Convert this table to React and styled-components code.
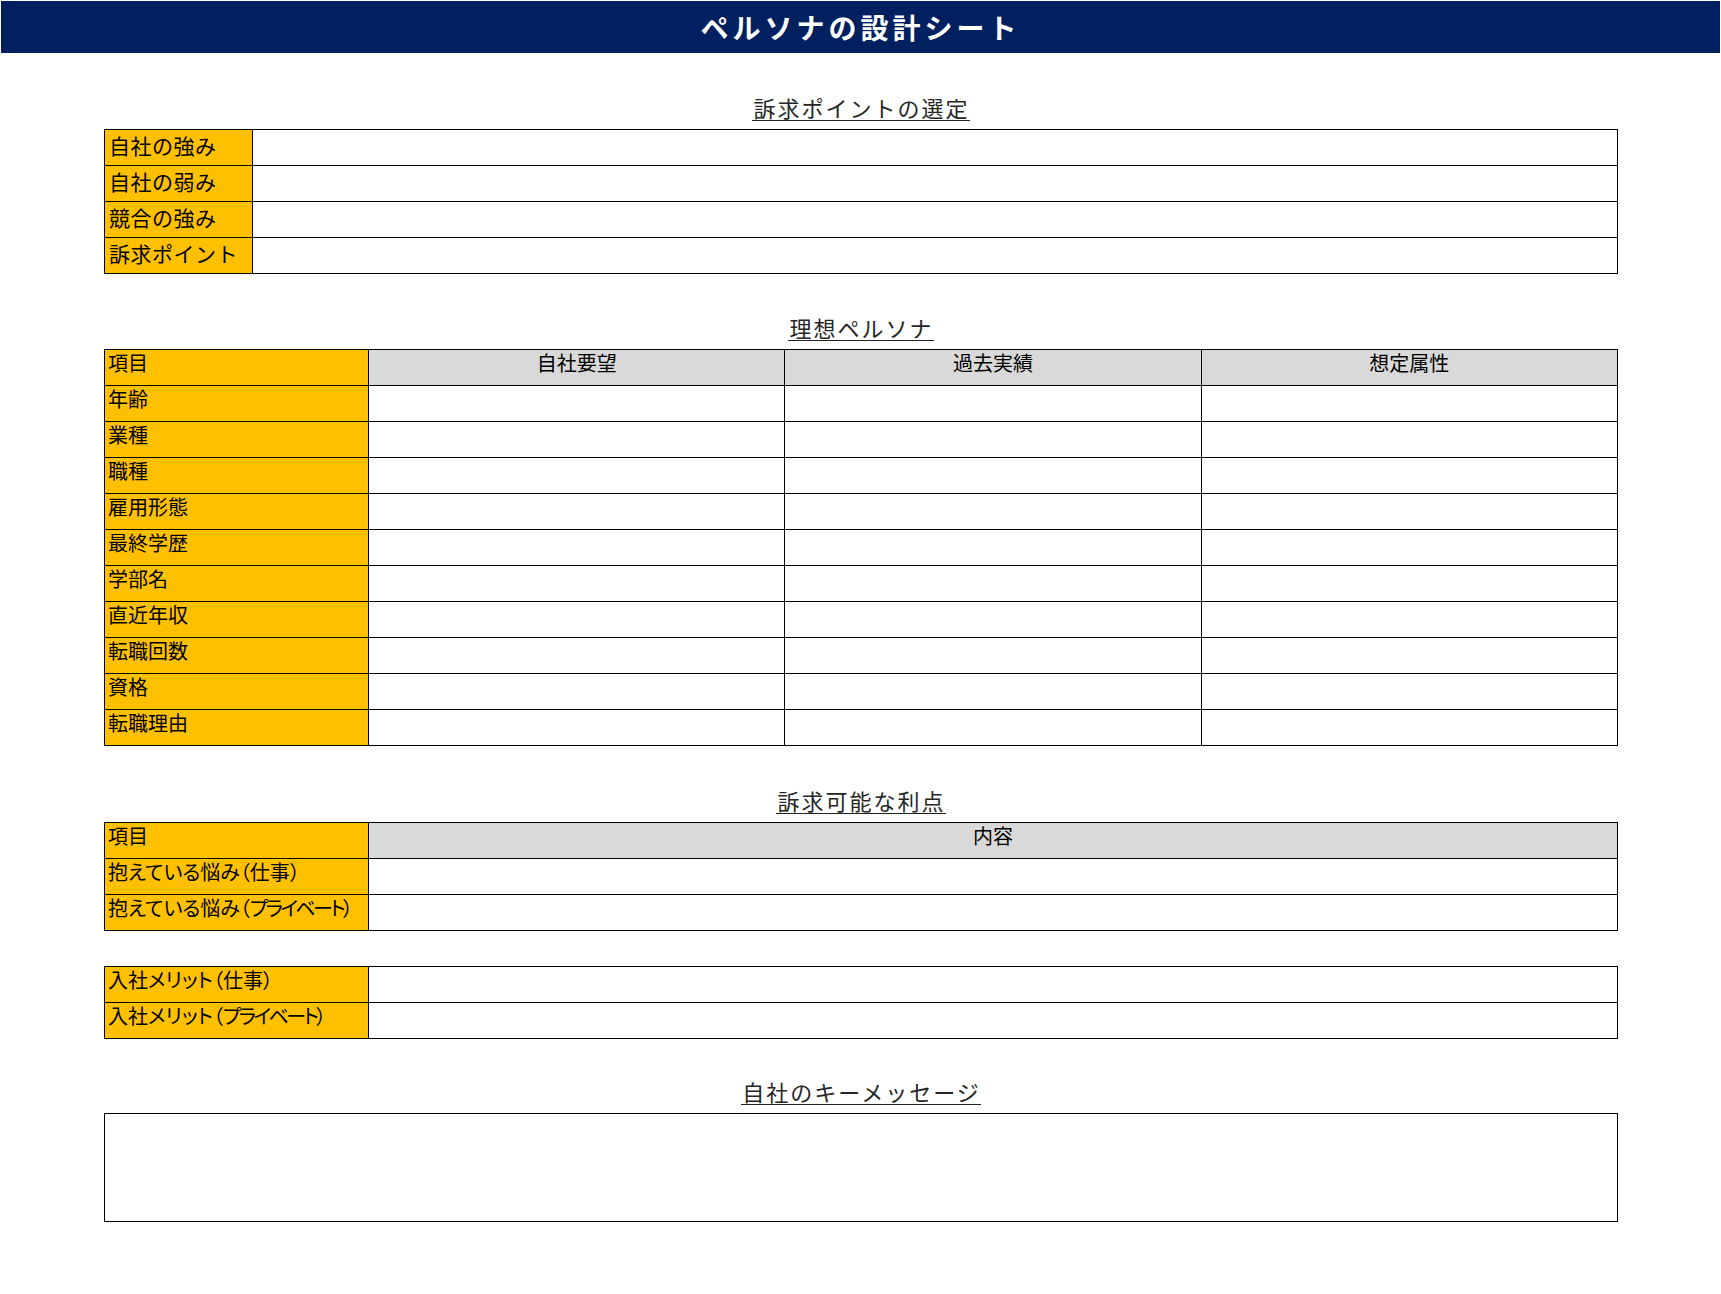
import React from 'react'
import styled, { createGlobalStyle } from 'styled-components'

const GlobalStyle = createGlobalStyle`
  body {
    margin: 0;
    background: #fff;
    font-family: "Noto Sans CJK JP", "Noto Sans", sans-serif;
    color: #000;
  }
`

const Header = styled.header`
  margin: 1px 1px 0;
  height: 52px;
  background: #002060;
  color: #fff;
  display: flex;
  align-items: center;
  justify-content: center;
  font-size: 28px;
  font-weight: 700;
  letter-spacing: 4px;
`

const Main = styled.main`
  width: 1514px;
  margin-left: 104px;
  padding-bottom: 60px;
`

const TitleRow = styled.div`
  display: flex;
  justify-content: center;
  margin-top: ${p => p.$top}px;
  margin-bottom: 8px;
`

const Title = styled.span`
  display: inline-block;
  font-size: 22px;
  line-height: 21px;
  letter-spacing: 2px;
  color: #262626;
  padding: 0 0 2px 1px;
  border-bottom: 1px solid #222;
`

const Grid = styled.div`
  display: grid;
  grid-template-columns: ${p => p.$cols};
  grid-auto-rows: 35px;
  gap: 1px;
  padding: 1px;
  background: #000;
  margin-top: ${p => p.$top || 0}px;
`

const Cell = styled.div`
  background: #fff;
`

const Label = styled.div`
  background: #ffc000;
  font-size: ${p => (p.$wide ? 21 : 20)}px;
  display: flex;
  align-items: ${p => (p.$wide ? 'center' : 'flex-start')};
  padding: ${p => (p.$wide ? '0 0 5px 4px' : '0 0 0 3px')};
  line-height: 26px;
  letter-spacing: ${p => (p.$wide ? '0.5px' : '0')};
  font-feature-settings: ${p => (p.$wide ? 'normal' : '"palt"')};
  white-space: nowrap;
`

// katakana in Meiryo UI is narrower than in Noto
const Kata = styled.span`
  letter-spacing: -2.6px;
`

const Head = styled.div`
  background: #d9d9d9;
  font-size: 20px;
  line-height: 26px;
  text-align: center;
  font-feature-settings: "palt";
`

const MessageBox = styled.div`
  box-sizing: border-box;
  height: 109px;
  border: 1px solid #000;
`

const strengths = ['自社の強み', '自社の弱み', '競合の強み', '訴求ポイント']
const persona = ['年齢', '業種', '職種', '雇用形態', '最終学歴', '学部名', '直近年収', '転職回数', '資格', '転職理由']
const pains = ['抱えている悩み（仕事）', '抱えている悩み（プライベート）']
const merits = ['入社メリット（仕事）', '入社メリット（プライベート）']

const renderLabel = text => {
  const parts = text.split('プライベート')
  if (parts.length === 1) return text
  return (
    <>
      {parts[0]}
      <Kata>プライベート</Kata>
      {parts[1]}
    </>
  )
}

export default function App() {
  return (
    <>
      <GlobalStyle />
      <Header>ペルソナの設計シート</Header>
      <Main>
        <TitleRow $top={44}><Title>訴求ポイントの選定</Title></TitleRow>
        <Grid $cols="147px 1fr">
          {strengths.map(s => (
            <React.Fragment key={s}>
              <Label $wide>{s}</Label>
              <Cell />
            </React.Fragment>
          ))}
        </Grid>

        <TitleRow $top={43}><Title>理想ペルソナ</Title></TitleRow>
        <Grid $cols="263px 1fr 1fr 1fr">
          <Label>項目</Label>
          <Head>自社要望</Head>
          <Head>過去実績</Head>
          <Head>想定属性</Head>
          {persona.map(p => (
            <React.Fragment key={p}>
              <Label>{p}</Label>
              <Cell />
              <Cell />
              <Cell />
            </React.Fragment>
          ))}
        </Grid>

        <TitleRow $top={44}><Title>訴求可能な利点</Title></TitleRow>
        <Grid $cols="263px 1fr">
          <Label>項目</Label>
          <Head>内容</Head>
          {pains.map(p => (
            <React.Fragment key={p}>
              <Label>{renderLabel(p)}</Label>
              <Cell />
            </React.Fragment>
          ))}
        </Grid>
        <Grid $cols="263px 1fr" $top={35}>
          {merits.map(m => (
            <React.Fragment key={m}>
              <Label>{renderLabel(m)}</Label>
              <Cell />
            </React.Fragment>
          ))}
        </Grid>

        <TitleRow $top={42}><Title>自社のキーメッセージ</Title></TitleRow>
        <MessageBox />
      </Main>
    </>
  )
}
